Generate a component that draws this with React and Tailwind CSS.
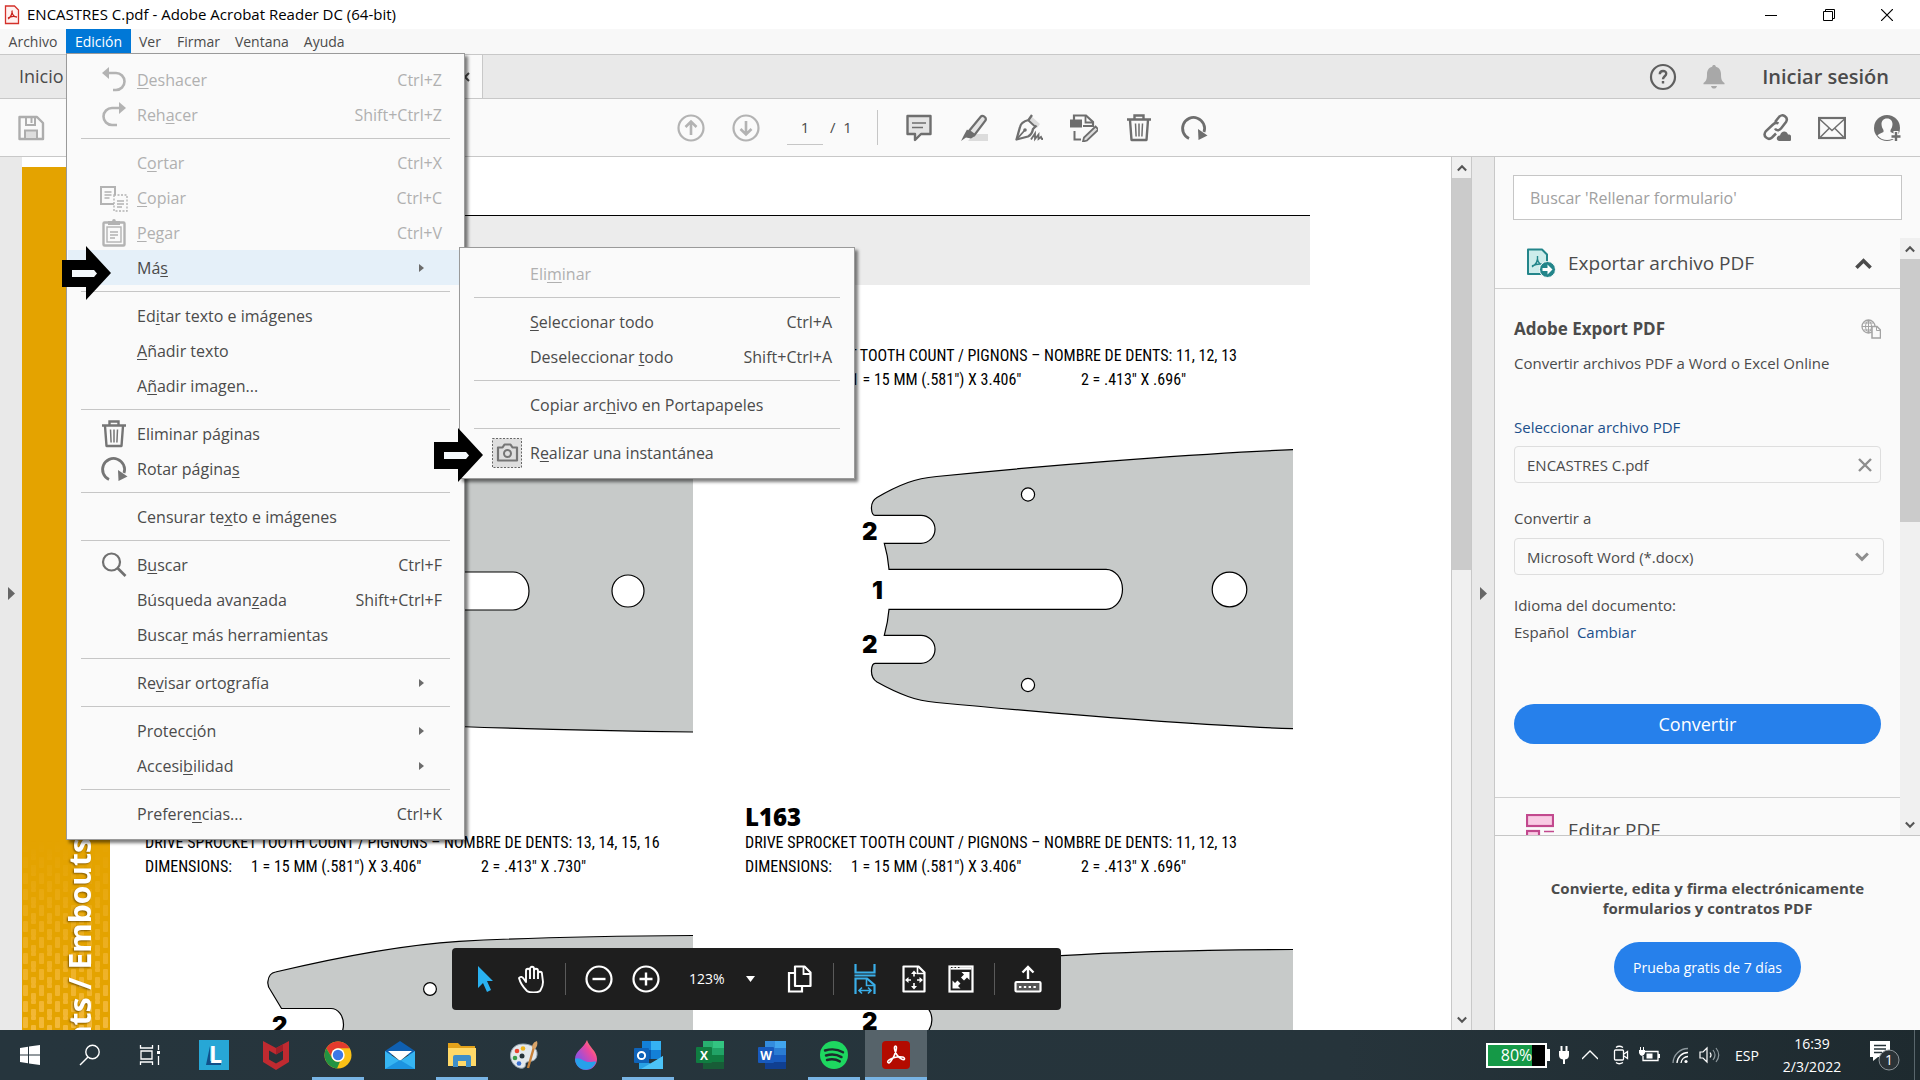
import React, { useState } from 'react';

const Svg = ({ w = 28, h = 28, box, className = '', children }) => (
  <svg width={w} height={h} viewBox={box || `0 0 ${w} ${h}`} fill="none" className={`shrink-0 ${className}`} aria-hidden="true">
    {children}
  </svg>
);

/* ---------- shared icons ---------- */

const UndoIcon = () => (
  <Svg>
    <path d="M8 7h8a8.5 8.5 0 0 1 0 17h-3" stroke="#b3b3b3" strokeWidth="2.6" />
    <path d="M2 7l7-6v12z" fill="#b3b3b3" />
  </Svg>
);

const RedoIcon = () => (
  <Svg>
    <path d="M20 7h-8a8.5 8.5 0 0 0 0 17h5" stroke="#b3b3b3" strokeWidth="2.6" />
    <path d="M26 7l-7-6v12z" fill="#b3b3b3" />
  </Svg>
);

const CopyIcon = () => (
  <Svg>
    <rect x="1" y="3" width="14" height="17" stroke="#b3b3b3" strokeWidth="2" />
    <path d="M4.5 8h7M4.5 11h7M4.5 14h5" stroke="#b3b3b3" strokeWidth="1.3" />
    <rect x="14" y="11" width="13" height="16" fill="#fafafa" stroke="#b3b3b3" strokeWidth="1.4" strokeDasharray="2 1.5" />
    <path d="M17 17h7M17 20h7M17 23h5" stroke="#b3b3b3" strokeWidth="1.3" />
  </Svg>
);

const PasteIcon = () => (
  <Svg>
    <rect x="3.5" y="3.5" width="21" height="23" rx="1" stroke="#b3b3b3" strokeWidth="2.4" />
    <rect x="7" y="8" width="14" height="15" stroke="#b3b3b3" strokeWidth="1.4" />
    <rect x="8" y="2" width="12" height="4" fill="#b3b3b3" />
    <circle cx="14" cy="1.8" r="1.8" fill="#b3b3b3" />
    <path d="M10 13h8M10 16h8M10 19h5" stroke="#b3b3b3" strokeWidth="1.3" />
  </Svg>
);

const TrashIcon = ({ color = '#6e6e6e' }) => (
  <Svg>
    <path d="M2 5.5h24M9.5 5V1.5h9V5" stroke={color} strokeWidth="2.4" />
    <path d="M5 6l1.5 20h15L23 6" stroke={color} strokeWidth="2.4" strokeLinejoin="round" />
    <path d="M10.5 9.5l.6 13M14 9.5v13M17.5 9.5l-.6 13" stroke={color} strokeWidth="1.5" />
  </Svg>
);

const RotateIcon = ({ color = '#6e6e6e' }) => (
  <Svg>
    <path d="M9 24.5A11 11 0 1 1 24 18" stroke={color} strokeWidth="2.8" />
    <path d="M18 15l9.500 6.500-9 4.500z" fill={color} />
  </Svg>
);

const FindIcon = () => (
  <Svg>
    <circle cx="11.5" cy="11" r="8.5" stroke="#707070" strokeWidth="2.2" />
    <path d="M17.5 17l8 8" stroke="#707070" strokeWidth="2.6" />
  </Svg>
);

const SnapshotIcon = () => (
  <Svg w={30} h={30}>
    <rect x=".5" y=".5" width="29" height="29" fill="#dedede" stroke="#666" strokeDasharray="2 1.5" />
    <path d="M6 9.5h4.5l2-3h6l2 3H25v13H6z" stroke="#757575" strokeWidth="2.2" strokeLinejoin="round" />
    <circle cx="15.5" cy="15.5" r="3.5" stroke="#757575" strokeWidth="2" />
  </Svg>
);

const Chevron = ({ up, w = 12, stroke = '#555', sw = 2.5 }) => (
  <Svg w={w} h={w} box="0 0 12 12">
    <path d={up ? 'M1 9l5-5 5 5' : 'M1 3l5 5 5-5'} stroke={stroke} strokeWidth={sw} />
  </Svg>
);

const Pointer = () => (
  <Svg w={49} h={54}>
    <path d="M0 14h24V0l25 27-25 27V41H0z" fill="#000" />
    <path d="M10 24h22l3 3.5-3 3.5H10z" fill="#f4f8fb" />
  </Svg>
);

/* ---------- edit menu ---------- */

const editMenu = [
  { label: '&Deshacer', keys: 'Ctrl+Z', off: true, icon: <UndoIcon /> },
  { label: 'Reh&acer', keys: 'Shift+Ctrl+Z', off: true, icon: <RedoIcon /> },
  null,
  { label: 'C&ortar', keys: 'Ctrl+X', off: true },
  { label: '&Copiar', keys: 'Ctrl+C', off: true, icon: <CopyIcon /> },
  { label: '&Pegar', keys: 'Ctrl+V', off: true, icon: <PasteIcon /> },
  { label: 'Má&s', sub: true, open: true },
  null,
  { label: 'Ed&itar texto e imágenes' },
  { label: '&Añadir texto' },
  { label: 'A&ñadir imagen...' },
  null,
  { label: 'Eliminar pá&ginas', icon: <TrashIcon color="#757575" /> },
  { label: 'Rotar página&s', icon: <RotateIcon color="#757575" /> },
  null,
  { label: 'Censurar te&xto e imágenes' },
  null,
  { label: 'B&uscar', keys: 'Ctrl+F', icon: <FindIcon /> },
  { label: 'Búsqueda avan&zada', keys: 'Shift+Ctrl+F' },
  { label: 'Busca&r más herramientas' },
  null,
  { label: 'Re&visar ortografía', sub: true },
  null,
  { label: 'Protecc&ión', sub: true },
  { label: 'Accesi&bilidad', sub: true },
  null,
  { label: 'Prefere&ncias...', keys: 'Ctrl+K' },
];

const moreMenu = [
  { label: 'Eli&minar', off: true },
  null,
  { label: '&Seleccionar todo', keys: 'Ctrl+A' },
  { label: 'Deseleccionar &todo', keys: 'Shift+Ctrl+A' },
  null,
  { label: 'Copiar arc&hivo en Portapapeles' },
  null,
  { label: 'R&ealizar una instantánea', icon: <SnapshotIcon /> },
];

const Mnemonic = ({ text }) => {
  const i = text.indexOf('&');
  return (
    <span className="whitespace-nowrap">
      {text.slice(0, i)}
      <span className="underline underline-offset-2">{text[i + 1]}</span>
      {text.slice(i + 2)}
    </span>
  );
};

const Menu = ({ items, className, children }) => (
  <ul className={`absolute border border-[#9a9a9a] bg-[#fafafa] py-2 text-[16px] shadow-[3px_3px_3px_rgba(0,0,0,0.5)] ${className}`}>
    {items.map((item, i) =>
      item === null ? (
        <li key={i} className="px-3.5 py-1.5" role="separator">
          <div className="h-px bg-[#c6c6c6]" />
        </li>
      ) : (
        <li key={i} className="relative px-px">
          <button
            disabled={item.off}
            className={`flex h-[35px] w-full items-center gap-[9px] pl-8 pr-[21px] text-left ${item.off ? 'text-[#b0b0b0]' : 'text-[#4b4b4b]'} ${item.open ? 'bg-[#e5f0f9]' : ''}`}
          >
            <span className="flex w-7 shrink-0 justify-center">{item.icon}</span>
            <Mnemonic text={item.label} />
            {item.keys && <span className="ml-auto">{item.keys}</span>}
            {item.sub && (
              <Svg w={5} h={8} className="ml-auto mr-[18px]">
                <path d="M0 0l5 4-5 4z" fill="#6b6b6b" />
              </Svg>
            )}
          </button>
          {item.open && children}
        </li>
      )
    )}
  </ul>
);

/* ---------- window chrome ---------- */

const TitleBar = () => (
  <header className="flex h-[29px] items-center bg-white pl-1 text-[15px] text-black">
    <Svg w={16} h={20}>
      <path d="M1.5 1h9l4 4v13.5h-13z" fill="#fff1f0" stroke="#d4312a" strokeWidth="1.3" />
      <path d="M4 14c3-2 4.500-6 4-8.500M8 7c.5 3 2.500 5 5 5M4 13c3-2 6-2 9-1" stroke="#c8201a" strokeWidth="1.3" />
    </Svg>
    <h1 className="ml-[7px]">ENCASTRES C.pdf - Adobe Acrobat Reader DC (64-bit)</h1>
    <div className="ml-auto flex items-center">
      <button aria-label="Minimizar" className="flex w-[58px] justify-center">
        <Svg w={12} h={12}><path d="M0 6.5h12" stroke="#000" /></Svg>
      </button>
      <button aria-label="Restaurar" className="flex w-[58px] justify-center">
        <Svg w={12} h={12}><path d="M.5 2.5h9v9h-9zM2.5 2.5v-2h9v9h-2" stroke="#000" /></Svg>
      </button>
      <button aria-label="Cerrar" className="mr-1 flex w-[58px] justify-center">
        <Svg w={12} h={12}><path d="M0 0l12 12M12 0L0 12" stroke="#000" strokeWidth="1.2" /></Svg>
      </button>
    </div>
  </header>
);

const MenuBar = () => (
  <nav className="flex h-[25px] bg-[#f8f8f8] text-[14px] text-[#4b4b4b]">
    <button className="w-[66px]">Archivo</button>
    <div className="relative h-6">
      <button className="h-6 w-[65px] bg-[#0078d7] text-white">Edición</button>
      <Menu items={editMenu} className="left-0 top-6 z-20 w-[399px]">
        <Menu items={moreMenu} className="-top-[3px] left-[392px] z-30 w-[396px]" />
      </Menu>
    </div>
    <button className="px-2">Ver</button>
    <button className="pl-2 pr-[7px]">Firmar</button>
    <button className="pl-2 pr-[7px]">Ventana</button>
    <button className="px-2">Ayuda</button>
  </nav>
);

const TabBar = () => (
  <div className="flex h-[45px] items-center border-y border-[#c8c8c8] bg-[#e9e9e9] text-[#4b4b4b]">
    <a href="#inicio" className="w-[82px] pl-[19px] text-[18px]">Inicio</a>
    <div className="flex h-full w-[401px] items-center justify-end border-r border-[#c8c8c8] bg-[#fafafa] pr-3">
      <button aria-label="Cerrar pestaña">
        <Svg w={10} h={10}><path d="M1 1l8 8M9 1L1 9" stroke="#4b4b4b" strokeWidth="2" /></Svg>
      </button>
    </div>
    <div className="ml-auto flex items-center pr-[31px]">
      <button aria-label="Ayuda">
        <Svg>
          <circle cx="14" cy="14" r="12" stroke="#5f5f5f" strokeWidth="2.2" />
          <path d="M10.8 11.3c0-4.300 6.600-4.300 6.400-.5-.1 2.400-3.200 2.600-3.200 5.400M14 18v2.500" stroke="#5f5f5f" strokeWidth="2.4" />
        </Svg>
      </button>
      <button aria-label="Notificaciones" className="ml-[23px]">
        <Svg>
          <path d="M14 2c1 0 1.800.7 1.800 1.700 3.700.9 5.200 4 5.200 7.300 0 5.500.8 7 3.500 9v1.200h-21V20C6.200 18 7 16.500 7 11c0-3.300 1.500-6.400 5.200-7.300C12.200 2.700 13 2 14 2zM11 23h6c-.5 3.400-5.500 3.400-6 0z" fill="#a8a8a8" />
        </Svg>
      </button>
      <button className="ml-[34px] text-[20px] font-semibold">Iniciar sesión</button>
    </div>
  </div>
);

const Tool = ({ label, children }) => (
  <button aria-label={label}>{children}</button>
);

const ToolBar = () => {
  const [page, setPage] = useState('1');
  return (
    <div className="flex h-[58px] items-center border-b border-[#c8c8c8] bg-[#fafafa] pl-[17px] pr-[19px] text-[15px] text-[#4b4b4b]">
      <Tool label="Guardar">
        <Svg>
          <path d="M2.5 3h17.500l6 6v16H2.500z" stroke="#adadad" strokeWidth="2.4" strokeLinejoin="round" />
          <path d="M9 3v8h9V3M14.5 4v5" stroke="#adadad" strokeWidth="2" />
          <path d="M8 25v-8.500h12V25z" fill="#dedede" stroke="#adadad" strokeWidth="2" />
        </Svg>
      </Tool>
      <div className="ml-[632px] flex items-center gap-[27px]">
        <Tool label="Página anterior">
          <Svg>
            <circle cx="14" cy="14" r="12.500" stroke="#b3b3b3" strokeWidth="2.200" />
            <path d="M14 21V8M8.500 13L14 7.500l5.500 5.500" stroke="#b3b3b3" strokeWidth="2.600" />
          </Svg>
        </Tool>
        <Tool label="Página siguiente">
          <Svg>
            <circle cx="14" cy="14" r="12.500" stroke="#b3b3b3" strokeWidth="2.200" />
            <path d="M14 7v13M8.500 15l5.500 5.500 5.500-5.500" stroke="#b3b3b3" strokeWidth="2.600" />
          </Svg>
        </Tool>
        <div className="-mr-0.5 flex items-center gap-[7px]">
          <input aria-label="Página" value={page} onChange={(e) => setPage(e.target.value)} className="h-[34px] w-9 border-b border-[#c6c6c6] bg-transparent text-center" />
          <span>/&nbsp; 1</span>
        </div>
        <span className="h-[35px] w-px bg-[#c6c6c6]" />
        <Tool label="Comentar">
          <Svg>
            <path d="M2.500 2h23v18H16l-6 6v-6H2.500z" fill="#e4e4e4" stroke="#6e6e6e" strokeWidth="2.400" strokeLinejoin="round" />
            <path d="M7 9h14M7 13.500h11" stroke="#6e6e6e" strokeWidth="1.600" />
          </Svg>
        </Tool>
        <Tool label="Resaltar">
          <Svg>
            <path d="M14 20h14v7H8z" fill="#dcdcdc" />
            <path d="M9 17L20.500 3c2-2.500 6.500.5 5 3.500L14.500 21z" fill="#e4e4e4" stroke="#6e6e6e" strokeWidth="2.200" />
            <path d="M7 15.500l8 6.500-4 2.500-5-1L1 27l3-6z" fill="#6e6e6e" />
          </Svg>
        </Tool>
        <Tool label="Firmar">
          <Svg>
            <path d="M16 2l9 8-3 4-9-7z" fill="#dcdcdc" />
            <path d="M17 1l-3.500 5Q6 8 5 13L1.500 25.500 13 22.500q4-2 5-7.500l3.500-3.500" stroke="#6e6e6e" strokeWidth="2.300" strokeLinejoin="round" />
            <path d="M13 6l7 6.500M2 25l7.500-8.500" stroke="#6e6e6e" strokeWidth="1.800" />
            <circle cx="10" cy="16" r="1.800" fill="#6e6e6e" />
            <path d="M16 25.500l4-6v5.500l3.500-4.500v4.500l2.500-2 1 2h1.500" stroke="#6e6e6e" strokeWidth="1.800" />
          </Svg>
        </Tool>
        <Tool label="Editar">
          <Svg>
            <path d="M4 6V1.500h12l7 6.500v4H13" stroke="#6e6e6e" strokeWidth="2.200" />
            <path d="M15.500 2v6.500H23" stroke="#6e6e6e" strokeWidth="1.800" />
            <rect x="0" y="5.500" width="12" height="8" fill="#6e6e6e" />
            <path d="M4.500 17v8.500H11" stroke="#6e6e6e" strokeWidth="2" />
            <path d="M25.500 12.500l3 3L17 26.500l-4 1 1-4z" fill="#dcdcdc" stroke="#6e6e6e" strokeWidth="1.800" />
          </Svg>
        </Tool>
        <Tool label="Eliminar páginas"><TrashIcon /></Tool>
        <Tool label="Rotar páginas"><RotateIcon /></Tool>
      </div>
      <div className="ml-auto flex items-center gap-[27px]">
        <Tool label="Compartir vínculo">
          <Svg>
            <path d="M12 8l4-5c3-4 10 0 7 5l-5 6.500c-2 2.500-5 2-6 0M15.500 9.500c-2.500-1.500-4.500 0-5.500 1L3 17c-4 5 2 10 6 6.500l4-4" stroke="#6e6e6e" strokeWidth="2.500" />
            <path d="M16 27c-4-1-2-6 1-5.500 1-5 7-5 8-1 4-.5 5 5 2 6.500z" fill="#6e6e6e" />
          </Svg>
        </Tool>
        <Tool label="Enviar por correo">
          <Svg>
            <rect x="1" y="4" width="26" height="20" stroke="#6e6e6e" strokeWidth="2.200" />
            <path d="M1.500 5L14 16.500 26.500 5M2 23.500l9-9M26 23.500l-9-9" stroke="#6e6e6e" strokeWidth="1.500" />
          </Svg>
        </Tool>
        <Tool label="Compartir con otras personas">
          <Svg>
            <circle cx="14" cy="14" r="13" fill="#6e6e6e" />
            <path d="M14 4.500c3.800 0 5.500 2.500 5.500 5.500 0 2.500-1 4.500-2 6v2c2 1 4.500 1.500 6 3.500-5 6-14 6-19 0 1.500-2 4-2.500 6-3.500v-2c-1-1.500-2-3.500-2-6 0-3 1.700-5.500 5.500-5.500z" fill="#fafafa" />
            <path d="M23 17v11M17.500 22.500h11" stroke="#fafafa" strokeWidth="5" />
            <path d="M23 18v9M18.500 22.500h9" stroke="#6e6e6e" strokeWidth="2.400" />
          </Svg>
        </Tool>
      </div>
    </div>
  );
};

/* ---------- PDF page ---------- */

const ink = { stroke: '#000', strokeWidth: 1.2 };

const BarLabel = ({ x, y, children }) => (
  <text x={x} y={y} fill="#000" className="font-['Inter',sans-serif] text-[24px] font-black">{children}</text>
);

const plates = [
  {
    title: '',
    teeth: '13, 14, 15, 16',
    second: '.730"',
    box: '145 392 548 411',
    art: (
      <>
        <path
          d="M693 449C600 452 520 454 459 457.500Q370 465 275.500 485Q266 492 269 502L281 520H331a13 14 0 0 1 0 28H284L289 572H513a16 19 0 0 1 0 38H289L284 634H331a13 14 0 0 1 0 28H281L269 680Q266 690 275.500 697Q370 718 459 726.500Q570 730.500 693 732"
          fill="#c7cac9"
          {...ink}
        />
        <circle cx="628" cy="591" r="16" fill="#fff" {...ink} />
      </>
    ),
  },
  {
    title: '',
    teeth: '11, 12, 13',
    second: '.696"',
    box: '745 392 548 411',
    art: (
      <>
        <path
          d="M1293 449.700C1210 453 1060 464 936.700 476.500Q920 478 908 482.500Q893 488 877 497.500Q871 501 871.500 509Q872 515.300 875 515.300H921a14 14 0 0 1 0 28H884.300Q888 556 889 569.300H1106a16.500 20 0 0 1 0 40H889Q888 622 884.300 635.300H921a14 14 0 0 1 0 28H875Q872 663.300 871.500 670Q871 678 877 682Q893 691 908 696.500Q920 701 936.700 702.500C1060 714 1210 726 1293 728.700"
          fill="#c7cac9"
          {...ink}
        />
        <circle cx="1028" cy="494.500" r="6.600" fill="#fff" {...ink} />
        <circle cx="1028" cy="685" r="6.600" fill="#fff" {...ink} />
        <circle cx="1229.500" cy="589.500" r="17.300" fill="#fff" {...ink} />
        <BarLabel x={862} y={540}>2</BarLabel>
        <BarLabel x={872} y={599}>1</BarLabel>
        <BarLabel x={862} y={653}>2</BarLabel>
      </>
    ),
  },
  {
    title: '',
    teeth: '13, 14, 15, 16',
    second: '.730"',
    box: '145 879 548 411',
    art: (
      <>
        <path
          d="M693 935.500C610 936 520 938 459 941.300Q385 946 275.500 972Q269 973 268 981Q267 986 271 991L281.500 1008.500H331a12.500 16 0 0 1 0 32H281V1200H693"
          fill="#c7cac9"
          {...ink}
        />
        <circle cx="430" cy="989" r="6.400" fill="#fff" {...ink} />
        <BarLabel x={272} y={1034}>2</BarLabel>
      </>
    ),
  },
  {
    title: 'L163',
    teeth: '11, 12, 13',
    second: '.696"',
    box: '745 879 548 411',
    art: (
      <>
        <path
          d="M1293 949.500C1220 950 1120 952 1061 955.700Q960 962 877 988Q868 992 872 1003H917a14 16 0 0 1 0 34H884V1200H1293"
          fill="#c7cac9"
          {...ink}
        />
        <BarLabel x={862} y={1030}>2</BarLabel>
      </>
    ),
  },
];

const Plate = ({ title, teeth, second, box, art }) => (
  <figure className="text-black">
    <figcaption className="whitespace-nowrap font-['Roboto_Condensed',Lato,sans-serif] text-[16px] leading-6">
      <h2 className="h-7 font-['Open_Sans',sans-serif] text-[24px] font-extrabold leading-7">{title}</h2>
      <p>DRIVE SPROCKET TOOTH COUNT / PIGNONS – NOMBRE DE DENTS: {teeth}</p>
      <p className="grid grid-cols-[106px_230px_auto]">
        <span>DIMENSIONS:</span>
        <span>1 = 15 MM (.581") X 3.406"</span>
        <span>2 = .413" X {second}</span>
      </p>
    </figcaption>
    <svg width="548" height="411" viewBox={box} aria-hidden="true">{art}</svg>
  </figure>
);

const ScrollBar = ({ thumb, className = '' }) => (
  <div className={`flex w-5 shrink-0 flex-col bg-[#f0f0f0] ${className}`}>
    <div className="flex h-[21px] shrink-0 items-center justify-center"><Chevron up w={10} /></div>
    <div className={`bg-[#cbcbcb] ${thumb}`} />
    <div className="mt-auto flex h-[21px] shrink-0 items-center justify-center"><Chevron w={10} /></div>
  </div>
);

const SideHandle = ({ label }) => (
  <button aria-label={label} className="flex w-[22px] shrink-0 items-center justify-center bg-[#e9e9e9]">
    <Svg w={7} h={13}><path d="M0 0l7 6.500L0 13z" fill="#666" /></Svg>
  </button>
);

const Document = () => (
  <main className="flex min-w-0 flex-1 overflow-hidden bg-white">
    <div className="relative mt-2.5 w-[88px] shrink-0 overflow-hidden bg-[#e4a300]">
      <svg className="absolute inset-x-0 bottom-0 h-[190px] w-full" aria-hidden="true">
        <defs>
          <pattern id="weave" width="16" height="16" patternUnits="userSpaceOnUse">
            <rect x="1" y="1" width="5" height="11" rx="1" fill="#f3b93a" />
            <rect x="9" y="9" width="5" height="7" rx="1" fill="#f3b93a" />
            <rect x="9" y="0" width="5" height="4" rx="1" fill="#f3b93a" />
          </pattern>
          <linearGradient id="fade" x1="0" y1="0" x2="0" y2="1">
            <stop offset="0" stopColor="#000" />
            <stop offset="1" stopColor="#fff" />
          </linearGradient>
          <mask id="weaveMask"><rect width="100%" height="100%" fill="url(#fade)" /></mask>
        </defs>
        <rect width="100%" height="100%" fill="url(#weave)" mask="url(#weaveMask)" />
      </svg>
      <p className="absolute left-[38px] top-[671px] rotate-180 whitespace-nowrap text-[30px] font-bold leading-10 text-white [text-shadow:-1px_-1px_2px_rgba(90,60,0,0.7)] [writing-mode:vertical-rl]">
        nts / Embouts
      </p>
    </div>
    <div className="min-w-0 flex-1">
      <div className="mr-[141px] mt-[58px] h-[70px] border-t border-black bg-[#ececec]" />
      <div className="ml-[35px] mt-[31px] grid grid-cols-[600px_548px]">
        {plates.map((p) => <Plate key={p.box} {...p} />)}
      </div>
    </div>
  </main>
);

const Divider = () => <span className="h-8 w-px bg-[#5a5a5a]" />;

const FloatingBar = () => (
  <div className="absolute bottom-5 left-[452px] z-10 flex h-[62px] items-center gap-[19px] rounded bg-[#1e1e1e] px-[19px] text-white">
    <Tool label="Seleccionar">
      <Svg><path d="M7 1l15 15h-6l4 9-4 2-4-9-5 5z" fill="#29b1f0" /></Svg>
    </Tool>
    <Tool label="Mano">
      <Svg>
        <path d="M9 26c-3-3-7-9-8-13 1.500-2 3.500-1 4.500.5L8 17V6c0-3 4-3 4 0v-2c0-3 4-3 4 0v2c0-3 4-3 4 0v3c0-3 4-3 4 0l1 8c0 5-2 7-3 9-3 2-10 2-13 0zM12 6v8M16 5v9M20 7v7" stroke="#fff" strokeWidth="1.900" strokeLinejoin="round" />
      </Svg>
    </Tool>
    <Divider />
    <Tool label="Alejar">
      <Svg><circle cx="14" cy="14" r="12.500" stroke="#fff" strokeWidth="2.200" /><path d="M7.500 14h13" stroke="#fff" strokeWidth="2.400" /></Svg>
    </Tool>
    <Tool label="Acercar">
      <Svg><circle cx="14" cy="14" r="12.500" stroke="#fff" strokeWidth="2.200" /><path d="M7.500 14h13M14 7.500v13" stroke="#fff" strokeWidth="2.400" /></Svg>
    </Tool>
    <div className="relative flex w-[88px] items-center">
      <select aria-label="Zoom" defaultValue="123%" className="w-full appearance-none bg-transparent pb-0.5 pl-2.5 text-[14px]">
        <option>123%</option>
      </select>
      <Svg w={9} h={6} className="pointer-events-none absolute right-3"><path d="M0 0h9L4.500 6z" fill="#fff" /></Svg>
    </div>
    <Tool label="Vista de página">
      <Svg>
        <path d="M8 8H3v18.500h13V21" stroke="#fff" strokeWidth="2.200" />
        <path d="M9 1.500h9.500l6 6V21H9z" stroke="#fff" strokeWidth="2.200" strokeLinejoin="round" />
        <path d="M17.500 2v7H25" stroke="#fff" strokeWidth="1.800" />
      </Svg>
    </Tool>
    <Divider />
    <Tool label="Ajustar al ancho">
      <Svg h={32}>
        <path d="M2.500 1v8.500h19V1M1.500 12.500h21M2.500 31V15.500H14l7.500 6.500v9" stroke="#3aaee8" strokeWidth="2.200" />
        <path d="M13.500 16v6.500H21M6 27.500h12M9 24.500l-3 3 3 3M15 24.500l3 3-3 3" stroke="#3aaee8" strokeWidth="1.600" />
      </Svg>
    </Tool>
    <Tool label="Ajustar una página">
      <Svg>
        <path d="M3.500 1.500h15l6 6v19h-21z" stroke="#fff" strokeWidth="2.200" strokeLinejoin="round" />
        <path d="M17.500 2v6.500H24M14 7.500v4M14 18v4.500M6.500 15h4.500M17 15h4.500" stroke="#fff" strokeWidth="1.600" />
        <path d="M14 5.500l3 3.500h-6zM14 24.500l3-3.500h-6zM5 15l3.500-3v6zM23 15l-3.500-3v6z" fill="#fff" />
      </Svg>
    </Tool>
    <Tool label="Pantalla completa">
      <Svg>
        <rect x="2.500" y="1.500" width="23" height="25" stroke="#fff" strokeWidth="2.200" />
        <path d="M3.500 3.500h21" stroke="#fff" strokeWidth="2.200" />
        <path d="M4 2.500h10" stroke="#1e1e1e" strokeDasharray="1.500 2" />
        <path d="M14.500 7h8v8l-2.500-2.500-3 3-3-3 3-3zM5.500 15.500L8 18l2.500-2.500 3 3L11 21l2.500 2.500h-8z" fill="#fff" />
      </Svg>
    </Tool>
    <Divider />
    <Tool label="Mostrar herramientas">
      <Svg>
        <path d="M14 14V2M8.500 7.500L14 2l5.500 5.500" stroke="#fff" strokeWidth="2.400" />
        <rect x="1.500" y="17" width="25" height="9.500" rx="1" fill="#555" stroke="#fff" strokeWidth="2.200" />
        <path d="M5 22h18" stroke="#fff" strokeWidth="2.200" strokeDasharray="2.400 2.400" />
      </Svg>
    </Tool>
  </div>
);

/* ---------- right panel ---------- */

const ExportIcon = () => (
  <Svg w={30} h={30}>
    <path d="M2 1.500h14l5 5V26H2z" fill="#cdeceb" stroke="#23858a" strokeWidth="2" strokeLinejoin="round" />
    <path d="M6 19c4-2.500 6-7 5.500-11M11.500 11c.5 4 3.500 6 7 6M6 18c4-2 8-2.500 12-1.500" stroke="#23858a" strokeWidth="1.400" />
    <circle cx="21.500" cy="21.500" r="8" fill="#23858a" stroke="#fafafa" strokeWidth="1" />
    <path d="M16.500 20h5v-3.500l5 5-5 5V23h-5z" fill="#fff" />
  </Svg>
);

const EditPdfIcon = () => (
  <Svg w={28} h={28}>
    <rect x="1" y="1" width="26" height="11" fill="#f9cbe4" stroke="#c2498e" strokeWidth="2.200" />
    <rect x="1" y="17" width="12" height="10" fill="#f9cbe4" stroke="#c2498e" strokeWidth="2.200" />
    <path d="M18 17.500h10M18 23h10" stroke="#c2498e" strokeWidth="1.600" />
  </Svg>
);

const SidePanel = () => (
  <aside className="flex w-[426px] shrink-0 flex-col border-l border-[#c8c8c8] bg-[#fafafa] text-[15px] text-[#4b4b4b]">
    <input aria-label="Buscar herramientas" placeholder="Buscar 'Rellenar formulario'" className="mx-[18px] mt-[18px] h-[45px] border border-[#c6c6c6] bg-white px-4 text-[16px] placeholder:text-[#a0a0a0]" />
    <div className="mt-[18px] flex min-h-0 flex-1">
      <div className="min-w-0 flex-1 overflow-hidden">
        <button className="flex h-[51px] w-full items-center border-b border-[#d0d0d0] pl-[31px] pr-7 text-[19px]">
          <ExportIcon />
          <span className="ml-3">Exportar archivo PDF</span>
          <span className="ml-auto"><Chevron up w={17} stroke="#4b4b4b" /></span>
        </button>
        <div className="flex flex-col border-b border-[#d0d0d0] px-[19px] pb-[53px] pt-7 leading-6">
          <div className="flex items-center justify-between">
            <h2 className="text-[17px] font-bold">Adobe Export PDF</h2>
            <Svg w={20} h={20}>
              <circle cx="7.500" cy="7.500" r="6.500" stroke="#a3a3a3" strokeWidth="1.300" />
              <path d="M1 7.500h13M7.500 1v13M2.500 4h10M2.500 11h10M7.500 1c-4 4-4 9 0 13M7.500 1c4 4 4 9 0 13" stroke="#a3a3a3" />
              <path d="M11 7.500h5l3.500 3.500v8H11z" fill="#fafafa" stroke="#a3a3a3" strokeWidth="1.500" />
              <path d="M15.500 8v3.500H19" stroke="#a3a3a3" />
            </Svg>
          </div>
          <p className="mt-2.5">Convertir archivos PDF a Word o Excel Online</p>
          <a href="#archivo" className="mt-10 text-[#1b4f8a]">Seleccionar archivo PDF</a>
          <div className="mt-[7px] flex h-[37px] items-center justify-between rounded border border-[#dedede] pl-3 pr-2">
            <span>ENCASTRES C.pdf</span>
            <button aria-label="Quitar archivo">
              <Svg w={14} h={14}><path d="M1 1l12 12M13 1L1 13" stroke="#8e8e8e" strokeWidth="2.400" /></Svg>
            </button>
          </div>
          <label htmlFor="formato" className="mt-[23px]">Convertir a</label>
          <div className="relative -mr-[3px] mt-2 flex items-center">
            <select id="formato" defaultValue="docx" className="h-[37px] w-full appearance-none rounded border border-[#dedede] bg-transparent pl-3">
              <option value="docx">Microsoft Word (*.docx)</option>
            </select>
            <span className="pointer-events-none absolute right-[15px]"><Chevron w={14} stroke="#8e8e8e" /></span>
          </div>
          <p className="mt-[18px]">Idioma del documento:</p>
          <p className="mt-[3px]">Español <a href="#idioma" className="ml-1 text-[#1b4f8a]">Cambiar</a></p>
          <button className="mt-[60px] h-10 rounded-full bg-[#2680eb] text-[18px] text-white">Convertir</button>
        </div>
        <button className="flex h-[51px] items-start pl-[31px] pt-4 text-[19px] leading-8">
          <EditPdfIcon />
          <span className="ml-3.5">Editar PDF</span>
        </button>
      </div>
      <ScrollBar thumb="h-[263px]" />
    </div>
    <div className="flex h-[195px] shrink-0 flex-col items-center border-t border-[#c6c6c6] pt-[42px] text-center">
      <p className="text-[15px] font-bold leading-5">
        Convierte, edita y firma electrónicamente<br />formularios y contratos PDF
      </p>
      <button className="mt-6 h-[50px] w-[187px] rounded-full bg-[#2680eb] text-[14px] text-white">Prueba gratis de 7 días</button>
    </div>
  </aside>
);

/* ---------- Windows taskbar ---------- */

const Office = ({ letter, dark, colors }) => (
  <Svg w={30} h={30}>
    <rect x="8" y="1" width="21" height="7" fill={colors[0]} />
    <rect x="8" y="8" width="21" height="7" fill={colors[1]} />
    <rect x="8" y="15" width="21" height="7" fill={colors[2]} />
    <rect x="8" y="22" width="21" height="7" fill={colors[3]} />
    <rect x="8" y="1" width="10" height="14" fill={colors[1]} opacity=".6" />
    <rect x="1" y="7" width="16" height="16" rx="1" fill={dark} />
    <text x="9" y="19.500" textAnchor="middle" fill="#fff" className="text-[12px] font-bold">{letter}</text>
  </Svg>
);

const apps = [
  {
    name: 'Inicio',
    icon: <Svg w={22} h={22}><path d="M1 4l8-1.200v7.700H1zM10 2.600L21 1v9.500H10zM1 11.500h8v7.700L1 18zM10 11.500h11V21l-11-1.600z" fill="#fff" /></Svg>,
  },
  {
    name: 'Buscar',
    icon: <Svg w={22} h={22}><circle cx="13.500" cy="8" r="6.700" stroke="#fff" strokeWidth="1.400" /><path d="M9 13l-8 8" stroke="#fff" strokeWidth="1.400" /></Svg>,
  },
  {
    name: 'Vista de tareas',
    icon: (
      <Svg w={22} h={22}>
        <path d="M2 7h11v8H2zM1.500 1v3h12V1M1.500 21v-3h12v3M19.500 1v5M19.500 12v9" stroke="#fff" strokeWidth="1.300" />
        <rect x="18" y="7" width="3" height="3" fill="#fff" />
      </Svg>
    ),
  },
  {
    name: 'L',
    icon: (
      <Svg w={30} h={30}>
        <rect width="30" height="30" fill="#27a7d6" />
        <path d="M7 25l4-19v15h11v4z" fill="#10508a" />
        <text x="10" y="23" fill="#fff" className="text-[23px] font-bold">L</text>
      </Svg>
    ),
  },
  {
    name: 'McAfee',
    icon: (
      <Svg w={30} h={30}>
        <path d="M2 1l13 7 13-7v21l-13 8-13-8z" fill="#c02a30" />
        <path d="M8 10.500l7 4 7-4v9l-7 4-7-4z" fill="#263339" />
        <path d="M15 8v6.500l7-4V4.500z" fill="#a01f28" />
      </Svg>
    ),
  },
  {
    name: 'Chrome',
    run: true,
    icon: (
      <Svg w={30} h={30}>
        <circle cx="15" cy="15" r="13.500" fill="#fbc116" />
        <path d="M3.300 8.300A13.500 13.500 0 0 1 26.700 8.300H15a6.700 6.700 0 0 0-6 9.500z" fill="#e33b2e" />
        <path d="M3.300 8.300l5.900 10A6.700 6.700 0 0 0 17 21.400L14 28.500A13.500 13.500 0 0 1 3.300 8.300z" fill="#229342" />
        <circle cx="15" cy="15" r="6.700" fill="#fff" />
        <circle cx="15" cy="15" r="5.200" fill="#3b78e7" />
      </Svg>
    ),
  },
  {
    name: 'Correo',
    icon: (
      <Svg w={30} h={30}>
        <path d="M0 11L15 1l15 10v4H0z" fill="#0f5fb0" />
        <path d="M0 11l15 10 15-10v18H0z" fill="#36b5f2" />
        <path d="M3 11h24l-12 10z" fill="#fff" />
        <path d="M0 29l15-9 15 9z" fill="#1c94e0" />
      </Svg>
    ),
  },
  {
    name: 'Explorador de archivos',
    run: true,
    icon: (
      <Svg w={30} h={30}>
        <path d="M1 3h10l3 3h14v5H1z" fill="#e3a21a" />
        <rect x="1" y="8" width="28" height="18" fill="#ffd968" />
        <path d="M6 27V17q0-2 2-2h14q2 0 2 2v10h-5v-6h-8v6z" fill="#3f8fc9" />
      </Svg>
    ),
  },
  {
    name: 'Paint',
    icon: (
      <Svg w={30} h={30}>
        <path d="M14 4C4 4 0 12 2 19s8 10 12 9 1-5 4-6 9 0 10-7S22 4 14 4z" fill="#e3e8ec" stroke="#9aa9b4" />
        <circle cx="8" cy="11" r="2.300" fill="#e8442e" />
        <circle cx="14" cy="8.500" r="2.300" fill="#f1b51c" />
        <circle cx="6" cy="18" r="2.300" fill="#3b9c4a" />
        <circle cx="10" cy="23.500" r="2.300" fill="#3a70d0" />
        <circle cx="13" cy="16" r="2.500" fill="#263339" />
        <path d="M25 7l-6 21" stroke="#c9823a" strokeWidth="2.400" />
        <path d="M23 8c0-4 2-6 5-7 1 3 0 6-2 8z" fill="#d8a368" />
      </Svg>
    ),
  },
  {
    name: 'Paint 3D',
    icon: (
      <Svg w={30} h={30}>
        <defs>
          <linearGradient id="drop" x1="1" y1="0" x2="0" y2="1">
            <stop offset="0" stopColor="#ffb13d" />
            <stop offset=".35" stopColor="#f0489a" />
            <stop offset=".65" stopColor="#a04fd6" />
            <stop offset="1" stopColor="#7a4fd6" />
          </linearGradient>
        </defs>
        <path d="M16 0c2 7 10 11 10 19a11 11 0 0 1-22 0C4 11 13 8 16 0z" fill="url(#drop)" />
        <path d="M4 19c4-3 9 3 14 3s6-1 7 0c-4 11-20 10-21-3z" fill="#27a0ea" />
      </Svg>
    ),
  },
  {
    name: 'Outlook',
    run: true,
    icon: (
      <Svg w={30} h={30}>
        <rect x="9" y="1" width="19" height="18" fill="#1380d8" />
        <path d="M18 1h10v9H18z" fill="#35b2f2" />
        <path d="M9 10h9v9H9z" fill="#0a5bb0" />
        <path d="M6 17l12 7 12-8v13H6z" fill="#28a0e4" />
        <path d="M30 16L8 29h22z" fill="#4cc3f7" />
        <rect x="1" y="8" width="15" height="15" rx="1" fill="#0f63b8" />
        <circle cx="8.500" cy="15.500" r="3.600" stroke="#fff" strokeWidth="2" />
      </Svg>
    ),
  },
  { name: 'Excel', icon: <Office letter="X" dark="#107c41" colors={['#33c481', '#21a366', '#107c41', '#185c37']} /> },
  { name: 'Word', icon: <Office letter="W" dark="#185abd" colors={['#41a5ee', '#2b7cd3', '#185abd', '#103f91']} /> },
  {
    name: 'Spotify',
    run: true,
    icon: (
      <Svg w={30} h={30}>
        <circle cx="15" cy="15" r="14" fill="#1ed760" />
        <path d="M6 10.500c6-1.800 13-1.200 18 1.800M7 15.500c5-1.500 11-1 15.500 1.600M8 20c4.500-1.200 9-.8 12.800 1.400" stroke="#1c2b2c" strokeWidth="2.400" strokeLinecap="round" />
      </Svg>
    ),
  },
  {
    name: 'Adobe Acrobat Reader',
    run: true,
    active: true,
    icon: (
      <Svg w={30} h={30}>
        <rect x="1" y="1" width="28" height="28" rx="4" fill="#b30b00" />
        <path d="M7 22.500c-2-2 5-5 9-5.500s8 0 7.500 2-5-.5-7.500-4-3.500-9-1.500-9 .5 6-1.500 10-4.500 8-6 6.500z" stroke="#fff" strokeWidth="1.600" />
      </Svg>
    ),
  },
];

const AppButton = ({ app, width }) => (
  <button aria-label={app.name} className={`relative flex h-full items-center justify-center ${width} ${app.active ? 'bg-[#56636a]' : ''}`}>
    {app.icon}
    {app.run && <span className={`absolute bottom-0 h-[3px] bg-[#78b4e4] ${app.active ? 'inset-x-0' : 'inset-x-[5px]'}`} />}
  </button>
);

const TaskBar = () => (
  <footer className="flex h-[50px] shrink-0 items-center gap-[3px] bg-linear-to-r from-[#26353d] via-[#26343b] via-70% to-[#1e2a2f] text-white">
    <div className="flex h-full">
      {apps.slice(0, 3).map((app) => <AppButton key={app.name} app={app} width="w-[60px]" />)}
    </div>
    <div className="flex h-full">
      {apps.slice(3).map((app) => <AppButton key={app.name} app={app} width="w-[62px]" />)}
    </div>
    <div className="ml-auto flex h-full items-center text-[14px]">
      <div className="flex items-center">
        <div className="flex h-[25px] w-[61px] justify-center border-2 border-white bg-linear-to-r from-[#159947] from-78% to-black to-78% text-[16px] leading-[21px]">80%</div>
        <span className="h-3 w-[3px] bg-white" />
      </div>
      <Svg w={12} h={20} className="ml-2">
        <path d="M3.500 1v6M8.500 1v6" stroke="#fff" strokeWidth="2" />
        <path d="M1 6h10v4q0 4-4 4.500V19H5v-4.500Q1 14 1 10z" fill="#fff" />
      </Svg>
      <Svg w={16} h={10} className="ml-3"><path d="M0 9l8-8 8 8" stroke="#fff" strokeWidth="1.300" /></Svg>
      <Svg w={16} h={20} className="ml-[15px]">
        <path d="M1.500 6q0-1 1-1h7q1 0 1 1v8q0 1-1 1h-7q-1 0-1-1zM11 9l3.500-2.500v7L11 11M3 2.500Q6 0 10 2.500M3 17.500q3 2.500 7 0" stroke="#fff" strokeWidth="1.300" />
      </Svg>
      <Svg w={21} h={16} className="ml-2.5">
        <path d="M6 4.500h13v9H4V9" stroke="#fff" strokeWidth="1.300" />
        <path d="M7.500 6.500h6v5h-6zM19 7h2v4h-2zM0 3h6v3q-1 3-3 3T0 6zM1 0h1v3H1zM4 0h1v3H4z" fill="#fff" />
      </Svg>
      <Svg w={17} h={17} className="ml-3">
        <path d="M1 16A15 15 0 0 1 16 1.500" stroke="#8d989d" strokeWidth="1.300" />
        <path d="M5 16A11 11 0 0 1 16 5.500M9 16a7 7 0 0 1 7-6.500" stroke="#fff" strokeWidth="1.300" />
        <circle cx="14" cy="14.500" r="1.600" fill="#fff" />
      </Svg>
      <Svg w={21} h={18} className="ml-2.5">
        <path d="M1 6h3l4-4v14l-4-4H1z" stroke="#fff" strokeWidth="1.200" />
        <path d="M11 6.500q2 2.500 0 5" stroke="#fff" strokeWidth="1.200" />
        <path d="M14 4q4 5 0 10M17 2q5.500 7 0 14" stroke="#8d989d" strokeWidth="1.200" />
      </Svg>
      <span className="ml-[15px] w-[26px]">ESP</span>
      <div className="ml-4 w-[70px] text-center leading-[23px]">16:39<br />2/3/2022</div>
      <button aria-label="Notificaciones" className="ml-[22px]">
        <Svg w={32} h={32}>
          <path d="M1 2h20v16H9l-5 4v-4H1z" fill="#fff" />
          <path d="M5 6.500h12M5 10h12M5 13.500h8" stroke="#263339" strokeWidth="1.300" />
          <circle cx="20" cy="21" r="10" fill="#2b3337" stroke="#8c9498" />
          <text x="20" y="26" textAnchor="middle" fill="#fff" className="text-[14px]">1</text>
        </Svg>
      </button>
      <span className="ml-[13px] mr-[5px] h-full w-px bg-[#59666c]" />
    </div>
  </footer>
);

const App = () => {
  return (
    <div className="relative flex h-screen flex-col overflow-hidden font-['Open_Sans','Noto_Sans',sans-serif]">
      <TitleBar />
      <MenuBar />
      <TabBar />
      <ToolBar />
      <div className="relative flex min-h-0 flex-1">
        <SideHandle label="Mostrar panel de navegación" />
        <Document />
        <ScrollBar thumb="h-[392px]" className="border-l border-[#c8c8c8]" />
        <div className="flex shrink-0 border-l border-[#c8c8c8]">
          <SideHandle label="Ocultar panel de herramientas" />
        </div>
        <SidePanel />
        <FloatingBar />
      </div>
      <TaskBar />
      <div className="absolute left-[62px] top-[246px] z-40"><Pointer /></div>
      <div className="absolute left-[434px] top-[428px] z-40"><Pointer /></div>
    </div>
  );
};

export default App;
